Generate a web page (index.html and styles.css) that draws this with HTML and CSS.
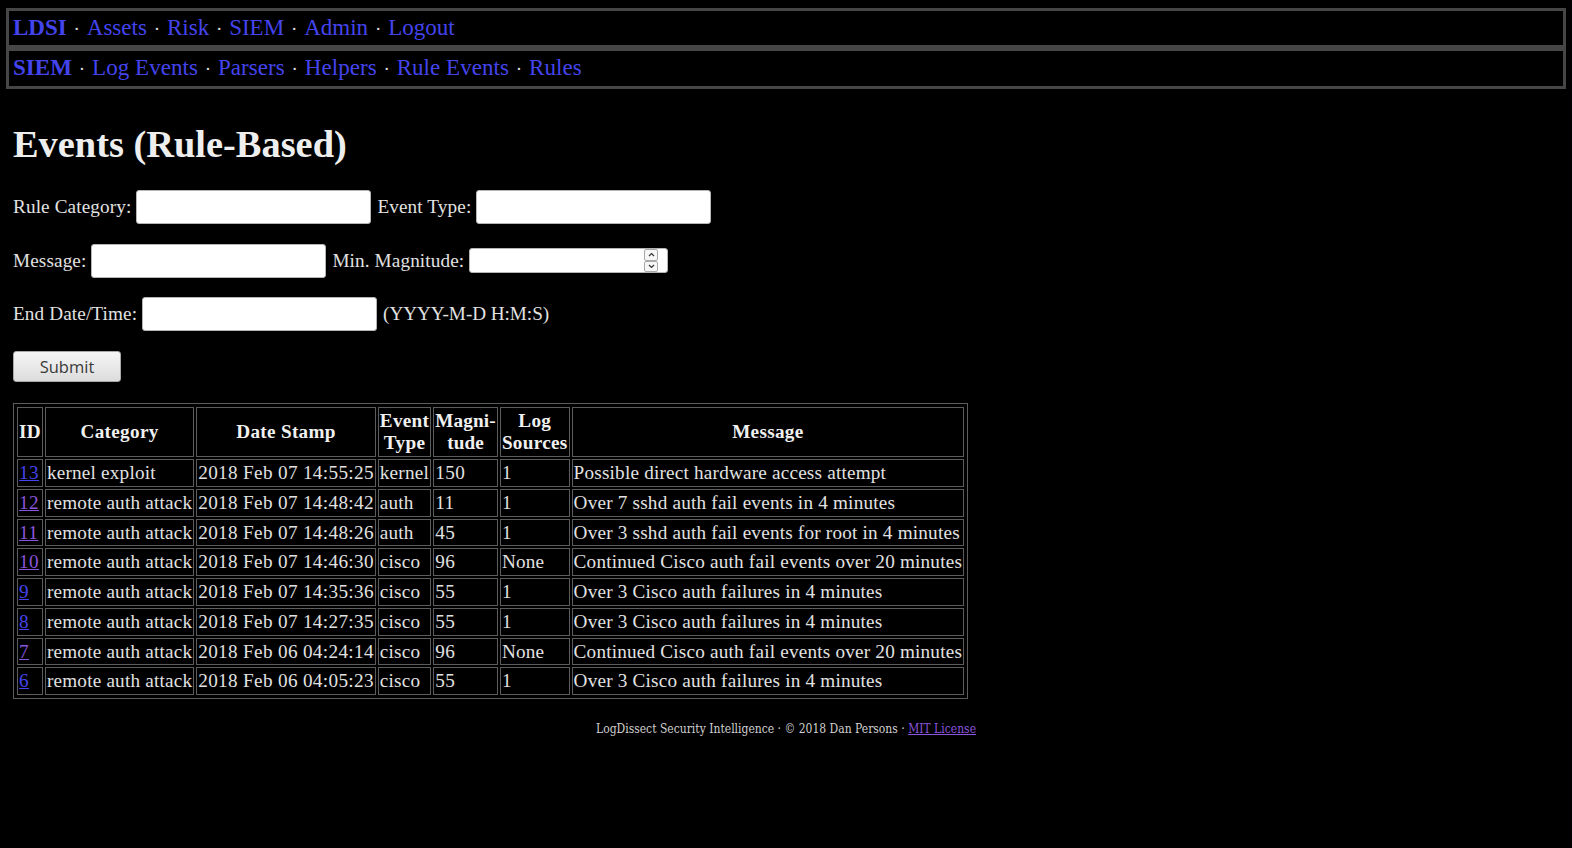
FILE: index.html
```html
<!DOCTYPE html>
<html>
<head>
<meta charset="utf-8">
<title>Events (Rule-Based)</title>
<link rel="stylesheet" href="styles.css">
</head>
<body>
<div class="nav">
  <a class="brand" href="#">LDSI</a><span class="sep"> · </span><a href="#">Assets</a><span class="sep"> · </span><a href="#">Risk</a><span class="sep"> · </span><a href="#">SIEM</a><span class="sep"> · </span><a href="#">Admin</a><span class="sep"> · </span><a href="#">Logout</a>
</div>
<div class="nav nav-sub">
  <a class="brand" href="#">SIEM</a><span class="sep"> · </span><a href="#">Log Events</a><span class="sep"> · </span><a href="#">Parsers</a><span class="sep"> · </span><a href="#">Helpers</a><span class="sep"> · </span><a href="#">Rule Events</a><span class="sep"> · </span><a href="#">Rules</a>
</div>
<main class="content">
  <h1 class="title">Events (Rule-Based)</h1>
  <form class="filters">
    <div class="row">
      <label>Rule Category:</label><input class="field" type="text">
      <label>Event Type:</label><input class="field" type="text">
    </div>
    <div class="row">
      <label>Message:</label><input class="field" type="text">
      <label>Min. Magnitude:</label>
      <div class="numbox"><input class="numfield" type="text"><div class="spin"><span class="spin-btn"><svg width="7" height="5" viewBox="0 0 7 5"><path d="M1 4 L3.5 1.5 L6 4" fill="none" stroke="#333" stroke-width="1.2"/></svg></span><span class="spin-btn"><svg width="7" height="5" viewBox="0 0 7 5"><path d="M1 1 L3.5 3.5 L6 1" fill="none" stroke="#333" stroke-width="1.2"/></svg></span></div></div>
    </div>
    <div class="row">
      <label>End Date/Time:</label><input class="field" type="text">
      <span class="hint">(YYYY-M-D H:M:S)</span>
    </div>
    <div class="row row-btn">
      <button class="submit" type="button">Submit</button>
    </div>
  </form>
  <table class="events">
    <tr><th>ID</th><th>Category</th><th>Date Stamp</th><th>Event<br>Type</th><th class="mag">Magni-<br>tude</th><th>Log<br>Sources</th><th>Message</th></tr>
    <tr><td><a href="#">13</a></td><td>kernel exploit</td><td class="date">2018 Feb 07 14:55:25</td><td>kernel</td><td class="num">150</td><td>1</td><td>Possible direct hardware access attempt</td></tr>
    <tr><td><a class="visited" href="#">12</a></td><td>remote auth attack</td><td class="date">2018 Feb 07 14:48:42</td><td>auth</td><td class="num">11</td><td>1</td><td>Over 7 sshd auth fail events in 4 minutes</td></tr>
    <tr><td><a class="visited" href="#">11</a></td><td>remote auth attack</td><td class="date">2018 Feb 07 14:48:26</td><td>auth</td><td class="num">45</td><td>1</td><td>Over 3 sshd auth fail events for root in 4 minutes</td></tr>
    <tr><td><a class="visited" href="#">10</a></td><td>remote auth attack</td><td class="date">2018 Feb 07 14:46:30</td><td>cisco</td><td class="num">96</td><td>None</td><td>Continued Cisco auth fail events over 20 minutes</td></tr>
    <tr><td><a href="#">9</a></td><td>remote auth attack</td><td class="date">2018 Feb 07 14:35:36</td><td>cisco</td><td class="num">55</td><td>1</td><td>Over 3 Cisco auth failures in 4 minutes</td></tr>
    <tr><td><a href="#">8</a></td><td>remote auth attack</td><td class="date">2018 Feb 07 14:27:35</td><td>cisco</td><td class="num">55</td><td>1</td><td>Over 3 Cisco auth failures in 4 minutes</td></tr>
    <tr><td><a class="visited" href="#">7</a></td><td>remote auth attack</td><td class="date">2018 Feb 06 04:24:14</td><td>cisco</td><td class="num">96</td><td>None</td><td>Continued Cisco auth fail events over 20 minutes</td></tr>
    <tr><td><a href="#">6</a></td><td>remote auth attack</td><td class="date">2018 Feb 06 04:05:23</td><td>cisco</td><td class="num">55</td><td>1</td><td>Over 3 Cisco auth failures in 4 minutes</td></tr>
  </table>
</main>
<footer class="footer">LogDissect Security Intelligence · © 2018 Dan Persons · <a class="visited" href="#">MIT License</a></footer>
</body>
</html>
```
FILE: styles.css
```css
html, body {
  margin: 0;
  padding: 0;
  background: #000;
}
body {
  color: #e2e2e2;
  font-family: "Liberation Serif", "Times New Roman", serif;
  font-size: 19.2px;
  padding-top: 8px;
}
a {
  color: #4444ee;
  text-decoration: none;
}
a.visited {
  color: #8a55dd;
}
.nav {
  margin: 0 6px;
  border: 3px solid #464646;
  padding: 3px 4px;
  font-size: 23.04px;
  line-height: 27px;
  color: #dddddd;
}
.nav-sub {
  padding: 3px 4px 4px;
}
.nav-sub a {
  letter-spacing: 0.04px;
}
.nav .brand {
  font-weight: bold;
}
.nav .sep {
  font-size: 19.2px;
  padding: 0 2px;
  color: #dddddd;
}
.content {
  padding: 0 13px;
}
.title {
  margin: 33px 0 0;
  font-size: 38.4px;
  line-height: 44px;
  font-weight: bold;
  color: #eeeeee;
}
.filters {
  margin-top: 24px;
  display: flex;
  flex-direction: column;
  gap: 19.5px;
}
.row {
  display: flex;
  align-items: center;
  gap: 5px;
  height: 34px;
  line-height: 22px;
}
.row label {
  letter-spacing: 0.12px;
}
.row-btn {
  height: 31px;
}
.field {
  box-sizing: border-box;
  width: 235px;
  height: 34px;
  margin: 0;
  background: #fff;
  border: 1px solid #b5b5b5;
  border-radius: 3px;
  font-size: 16px;
  padding: 2px 6px;
}
.field + label,
.field + span {
  margin-left: 1px;
}
.hint {
  letter-spacing: -0.05px;
}
.numbox {
  box-sizing: border-box;
  width: 199px;
  height: 25px;
  display: flex;
  align-items: stretch;
  background: #fff;
  border: 1px solid #b5b5b5;
  border-radius: 3px;
  padding-right: 9px;
}
.numfield {
  flex: 1;
  min-width: 0;
  border: none;
  background: transparent;
  margin: 0;
  padding: 0 4px;
  font-size: 14px;
  outline: none;
}
.spin {
  width: 14px;
  display: flex;
  flex-direction: column;
}
.spin-btn {
  flex: 1;
  display: flex;
  align-items: center;
  justify-content: center;
  border: 1px solid #a9a9a9;
  border-radius: 2px;
  background: #f6f6f6;
}
.submit {
  box-sizing: border-box;
  width: 108px;
  height: 31px;
  margin: 0;
  padding: 0;
  border: 1px solid #a8a8a8;
  border-radius: 3px;
  background: linear-gradient(#f6f6f6, #dcdcdc);
  font-family: "Open Sans", "Noto Sans", sans-serif;
  font-size: 16.5px;
  color: #3a3a3a;
}
.events {
  margin-top: 21px;
  border: 1px solid #5c5c5c;
  border-spacing: 2px;
  padding: 1px;
  color: #e2e2e2;
}
.events th,
.events td {
  border: 1px solid #5c5c5c;
  padding: 2px 1px;
  line-height: 21.75px;
  text-align: left;
  white-space: nowrap;
  letter-spacing: 0.2px;
}
.events th {
  text-align: center;
  color: #f0f0f0;
  font-weight: bold;
  line-height: 22.25px;
  letter-spacing: 0.3px;
}
.events th.mag {
  letter-spacing: 0.15px;
}
.events td.date,
.events td.num {
  letter-spacing: 0.33px;
}
.events td a {
  text-decoration: underline;
  letter-spacing: 0.4px;
}
.footer {
  margin-top: 23px;
  text-align: center;
  font-family: "DejaVu Serif Condensed", "DejaVu Serif", serif;
  font-stretch: semi-condensed;
  font-size: 12px;
  color: #d0d0d0;
}
.footer a {
  text-decoration: underline;
}
```
